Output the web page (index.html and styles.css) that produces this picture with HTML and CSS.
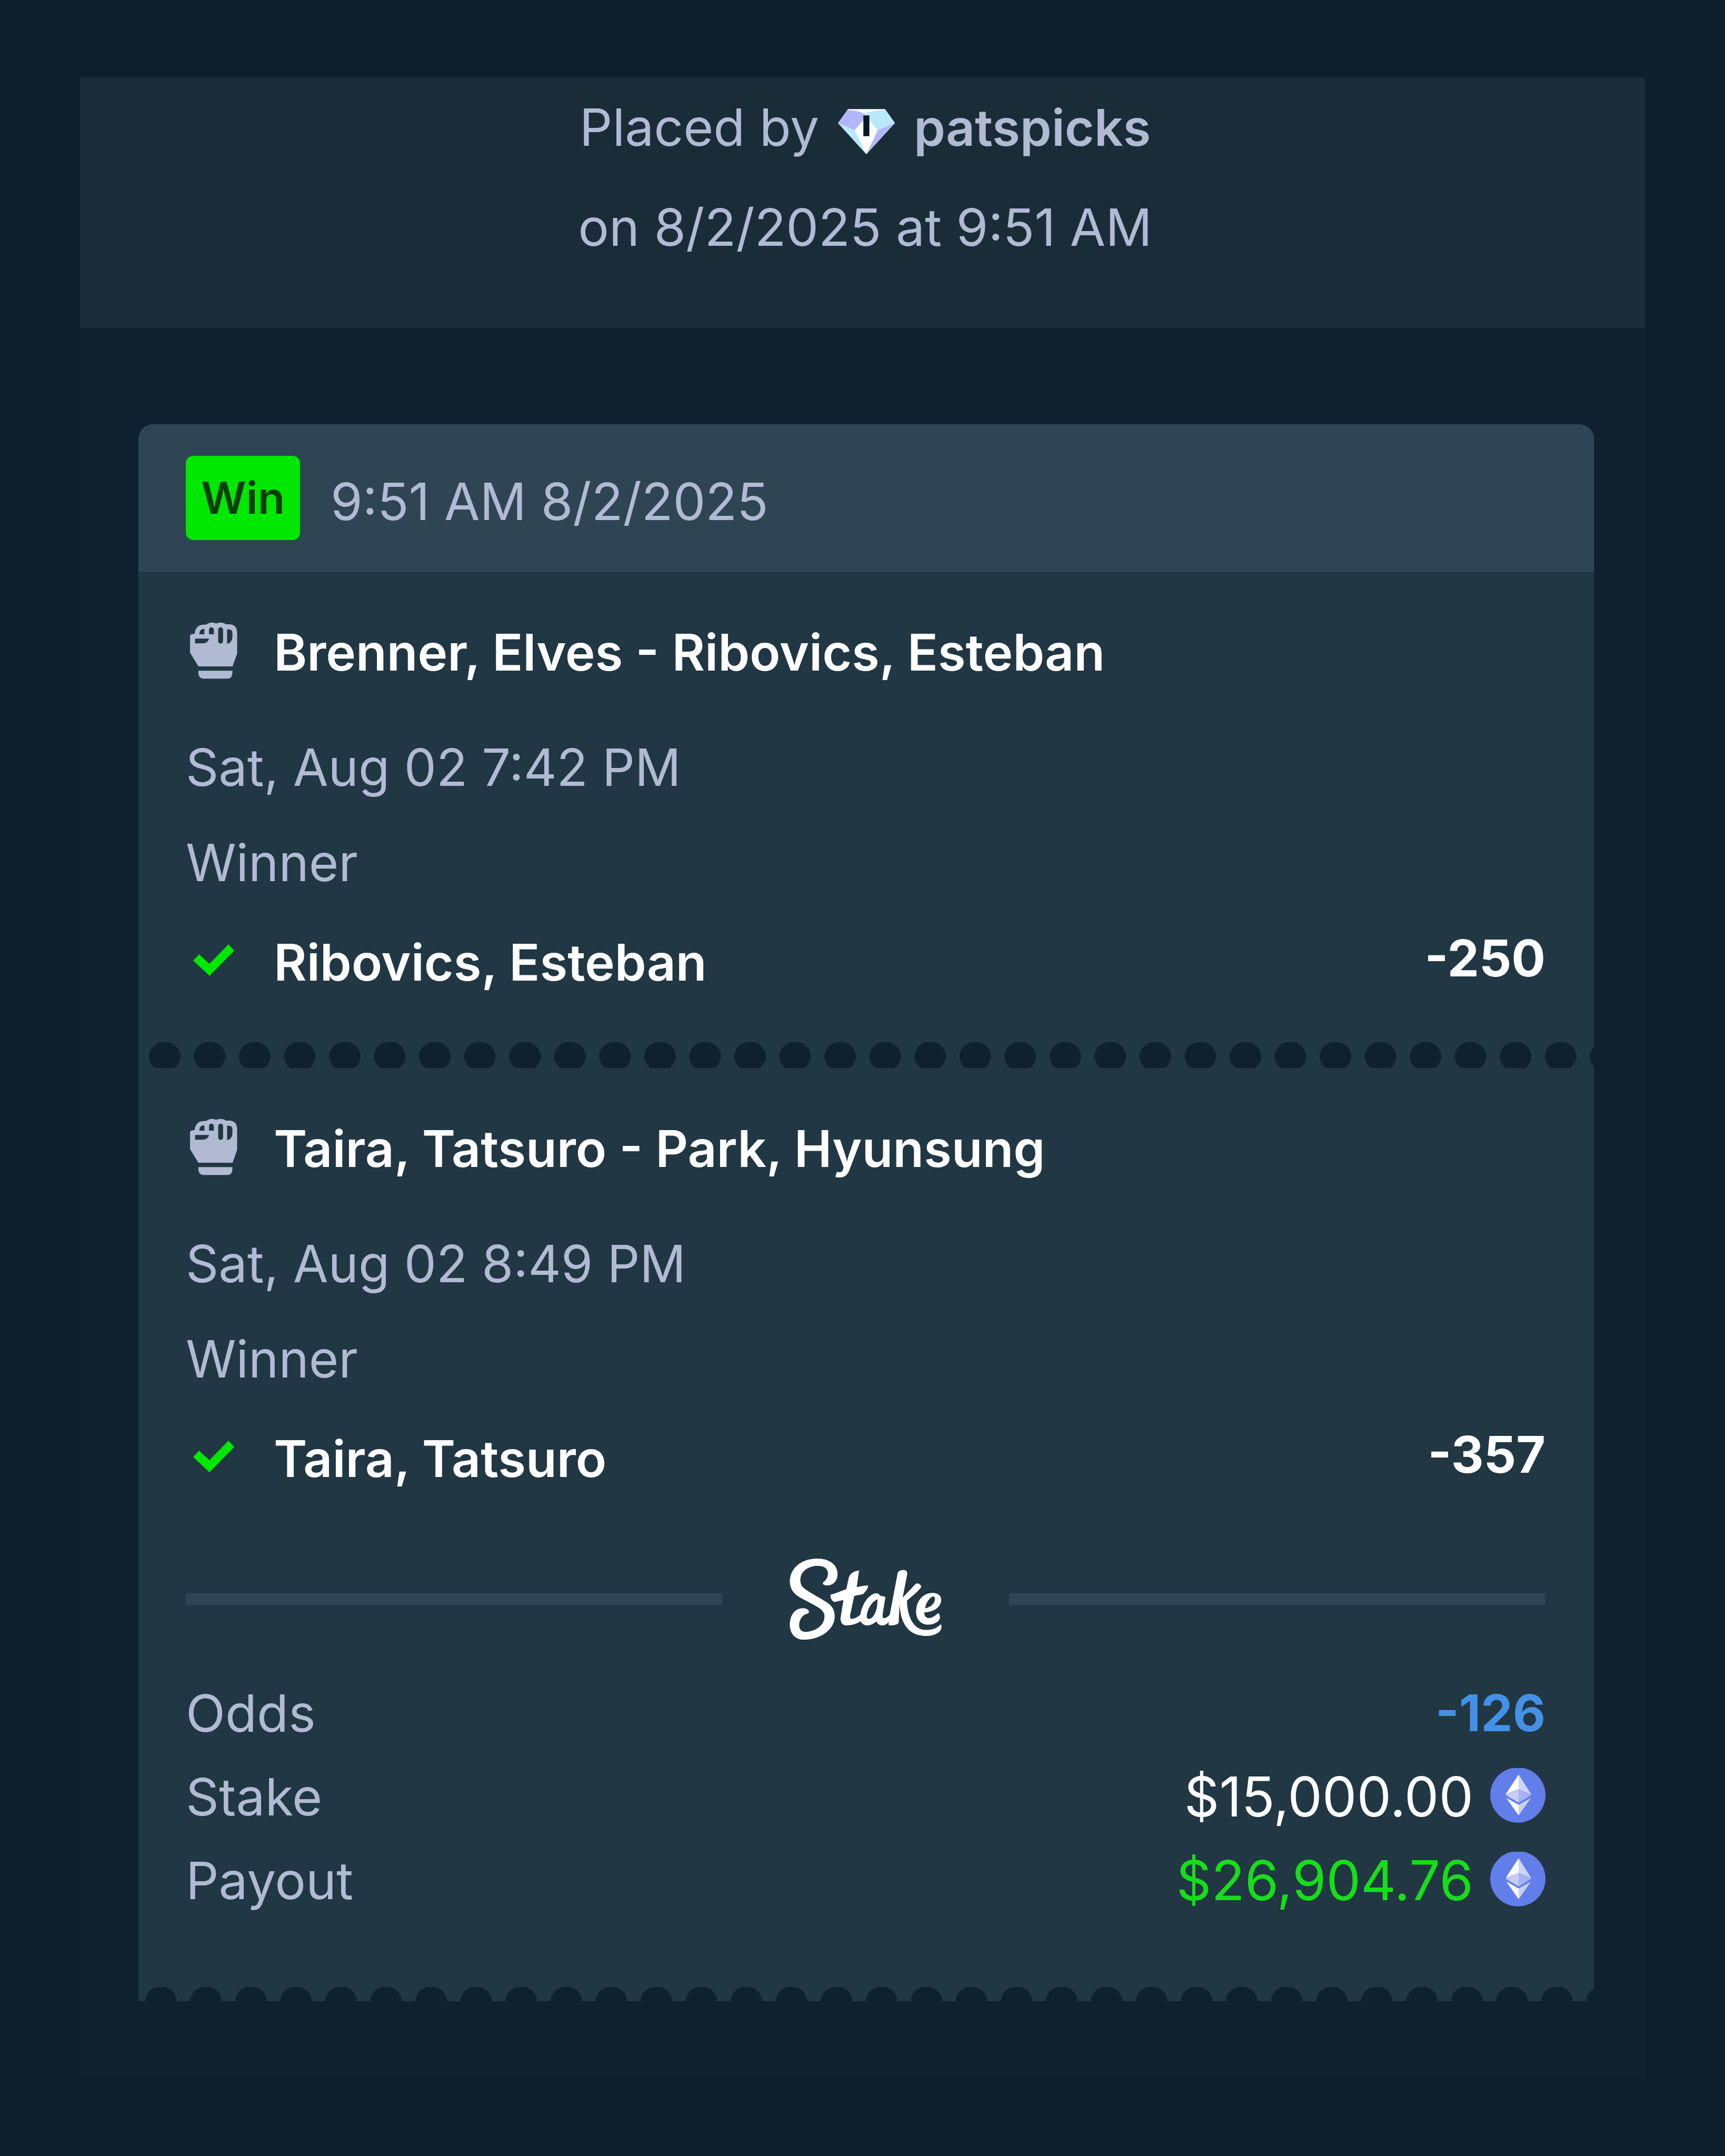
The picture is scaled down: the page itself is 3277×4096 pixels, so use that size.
FILE: index.html
```html
<!DOCTYPE html>
<html lang="en">
<head>
<meta charset="utf-8">
<title>Bet slip</title>
<link rel="stylesheet" href="styles.css">
</head>
<body>
<svg class="defs" width="0" height="0" aria-hidden="true">
  <symbol id="glove" viewBox="93 121 384 440">
    <path fill-rule="evenodd" d="M122 228Q122 217 135 215L155 212C155 178 178 150 212 150L238 148C250 134 290 130 303 143C315 132 355 130 370 147H395C430 147 450 170 450 205V350L418 440H180L122 345ZM187 216C187 190 200 176 222 180V216ZM254 216V185Q256 168 270 168Q286 168 288 185V216ZM318 185Q320 168 335 168Q350 168 352 185V264Q350 281 335 281Q320 281 318 264ZM380 182Q417 180 417 205V240Q410 280 380 282ZM157 247H255Q245 280 210 280H157Z"/>
    <path d="M180 470H417V488Q415 525 385 525H212Q182 522 180 488Z"/>
  </symbol>
  <symbol id="check" viewBox="0 0 105 120">
    <path d="M14 57L25 45L45 63L81 26L92 38L45 86Z"/>
  </symbol>
  <symbol id="eth" viewBox="165 118 387 383">
    <circle cx="358.500" cy="307" r="193.500" fill="#627eea"/>
    <path fill="#fff" d="M364 163V265L272 303Z"/>
    <path fill="#cdd6fa" d="M364 163V265L453 303Z"/>
    <path fill="#c6cdf7" d="M364 265V360L272 306Z"/>
    <path fill="#a6b3f2" d="M364 265V360L453 306Z"/>
    <path fill="#fff" d="M278 327L364 375V450Z"/>
    <path fill="#c8d1fa" d="M450 327L364 375V450Z"/>
  </symbol>
</svg>
<main class="panel">
  <header class="placed">
    <p class="placed-line">
      <span>Placed by</span>
      <svg class="rank" viewBox="115 37 397 371" role="img" aria-label="Diamond rank">
        <path fill="#fff" d="M185 93H443L512 190L313 408L115 190Z"/>
        <path fill="#b1b5fa" d="M181 99Q255 103 298 125L290 170L232 240L115 190Z"/>
        <path fill="#b9e8fb" d="M294 124Q350 103 447 98L512 190L393 240L334 172V137H294Z"/>
        <path fill="#b9e8fb" d="M115 190L232 240L313 408Z"/>
        <path fill="#b1b5fa" d="M512 190L393 240L313 408Z"/>
        <path fill="#071824" d="M292 137H334V282H292Z"/>
      </svg>
      <a class="user" href="#patspicks">patspicks</a>
    </p>
    <p>on 8/2/2025 at 9:51 AM</p>
  </header>

  <article class="card">
    <header class="card-head">
      <span class="badge">Win</span>
      <time class="card-time">9:51 AM 8/2/2025</time>
    </header>

    <section class="leg">
      <h2 class="row"><svg class="icon"><use href="#glove"/></svg>Brenner, Elves - Ribovics, Esteban</h2>
      <p class="detail">Sat, Aug 02 7:42 PM</p>
      <p class="detail">Winner</p>
      <div class="pick">
        <span class="row"><svg class="icon won"><use href="#check"/></svg>Ribovics, Esteban</span>
        <strong class="odds">-250</strong>
      </div>
    </section>
    <div class="perforation"></div>
    <section class="leg">
      <h2 class="row"><svg class="icon"><use href="#glove"/></svg>Taira, Tatsuro - Park, Hyunsung</h2>
      <p class="detail">Sat, Aug 02 8:49 PM</p>
      <p class="detail">Winner</p>
      <div class="pick">
        <span class="row"><svg class="icon won"><use href="#check"/></svg>Taira, Tatsuro</span>
        <strong class="odds">-357</strong>
      </div>
    </section>

    <div class="divider">
      <svg class="logo" viewBox="155 108 1055 564" role="img" aria-label="Stake">
        <path d="M385 275C405 260 422 240 420 205C415 170 385 158 345 158C280 160 228 200 228 255C228 300 250 315 290 340C340 372 400 400 435 430C460 455 467 480 467 515C465 600 370 672 250 672C190 672 155 625 155 570C155 500 190 455 245 453C270 452 290 465 288 480C286 492 270 492 255 500C230 520 220 545 220 575C222 605 240 618 265 618C340 615 396 570 396 510C396 490 390 480 370 460C330 430 270 405 220 375C180 350 155 320 155 265C158 170 240 108 345 108C430 108 487 150 487 215C487 265 455 295 415 295C395 295 382 288 385 275Z"/>
        <path d="M637 190C600 195 575 210 565 240L548 320C510 335 470 350 437 360C437 385 450 405 465 410L528 396L508 520C505 550 520 573 550 573C590 573 625 560 652 540L648 496C622 520 600 527 585 527C573 527 573 515 575 500L603 368L665 355C685 335 700 315 700 295C670 297 645 300 620 307Z"/>
        <path fill-rule="evenodd" d="M820 375C810 370 795 370 782 365C775 352 765 348 750 350C700 360 655 430 645 500C635 545 660 573 695 573C720 573 740 560 757 545C765 565 780 573 800 573C820 573 835 560 845 545L858 492C835 515 820 525 808 523C798 520 800 500 803 480ZM765 390C720 410 690 470 690 515C695 532 715 530 730 515C755 490 765 440 765 390Z"/>
        <path d="M905 210C910 195 925 188 945 188C962 188 973 198 972 215L940 380L1030 285C1045 275 1065 285 1070 305C1050 335 1000 375 970 400C970 480 1000 600 1095 604C1150 606 1180 590 1207 563C1215 590 1205 610 1190 622C1160 642 1130 648 1090 646C980 640 925 560 918 425L912 555C905 570 860 578 843 570C840 550 845 530 850 500Z"/>
        <path fill-rule="evenodd" d="M1090 483C1090 510 1105 522 1125 522C1150 520 1170 500 1187 488C1200 495 1205 520 1190 540C1170 560 1145 568 1120 568C1065 568 1033 530 1033 475C1035 400 1085 348 1145 347C1185 347 1208 365 1208 395C1207 445 1160 478 1090 483ZM1097 455C1135 447 1165 420 1165 385C1160 365 1145 370 1130 385C1110 405 1098 430 1097 455Z"/>
      </svg>
    </div>

    <dl class="totals">
      <div class="total"><dt>Odds</dt><dd class="total-odds">-126</dd></div>
      <div class="total"><dt>Stake</dt><dd class="money">$15,000.00<svg class="coin"><use href="#eth"/></svg></dd></div>
      <div class="total"><dt>Payout</dt><dd class="money payout">$26,904.76<svg class="coin"><use href="#eth"/></svg></dd></div>
    </dl>
    <div class="perforation torn"></div>
  </article>
</main>
</body>
</html>
```
FILE: styles.css
```css
* {
  box-sizing: border-box;
  margin: 0;
  padding: 0;
}

body {
  padding: 147px 152px;
  background: #0d1f2d;
  color: #b1bad3;
  font-family: Inter, "Open Sans", sans-serif;
  font-size: 98px;
}

.defs {
  position: absolute;
}

svg {
  display: block;
  flex: none;
}

.panel {
  padding-bottom: 148px;
  background: #0f212e;
}

.placed {
  padding: 0 0 96px 10px;
  background: #1a2c38;
  line-height: 190px;
  text-align: center;
}

.placed-line {
  display: flex;
  align-items: center;
  justify-content: center;
  gap: 36px;
}

.rank {
  width: 108px;
  height: 101px;
}

.user {
  color: inherit;
  font-size: 96px;
  font-weight: 600;
  text-decoration: none;
}

.card {
  margin: 183px 97px 0 111px;
  overflow: hidden;
  border-radius: 28px 28px 0 0;
  background: #213743;
}

.card-head {
  display: flex;
  align-items: center;
  gap: 58px;
  height: 280px;
  padding: 0 90px;
  background: #2f4553;
}

.badge {
  width: 217px;
  border-radius: 14px;
  background: #00e701;
  color: #013e01;
  font-size: 84px;
  font-weight: 600;
  line-height: 160px;
  text-align: center;
}

.card-time {
  padding-top: 12px;
}

.leg {
  padding: 75px 92px 72px 90px;
}

.row {
  display: flex;
  align-items: center;
  gap: 62px;
  color: #fff;
  font-size: 96px;
  font-weight: 600;
  line-height: 156px;
}

.icon {
  width: 105px;
  height: 120px;
  fill: #b1bad3;
}

.won {
  fill: #00e701;
}

.detail {
  font-size: 97px;
  line-height: 181px;
}

.row + .detail {
  margin-top: 50px;
}

.pick {
  display: flex;
  align-items: center;
  justify-content: space-between;
  height: 160px;
  margin-top: 19px;
}

.odds {
  padding-bottom: 16px;
  color: #fff;
  font-size: 96px;
  font-weight: 700;
}

.perforation {
  height: 49px;
  background: radial-gradient(30px 28px at 50% 27px, #0f212e 97%, transparent 102%) 7px 0 / calc(100% / 32.32) 100%;
}

.torn {
  height: 27px;
  background-position-x: 0;
}

.divider {
  display: flex;
  align-items: center;
  gap: 128px;
  padding: 38px 92px 0 90px;
}

.divider::before,
.divider::after {
  flex: 1;
  height: 22px;
  background: #2f4553;
  content: "";
}

.logo {
  width: 289px;
  height: 154px;
  fill: #fff;
}

.totals {
  padding: 60px 92px 123px 90px;
  line-height: 159px;
}

.total {
  display: flex;
  justify-content: space-between;
}

.total-odds {
  color: #4391e7;
  font-size: 96px;
  font-weight: 700;
}

.money {
  display: flex;
  align-items: center;
  gap: 32px;
  color: #fff;
  font-size: 104px;
}

.payout {
  color: #17dd1a;
}

.coin {
  width: 105px;
  height: 104px;
  margin-bottom: 6px;
}
```
